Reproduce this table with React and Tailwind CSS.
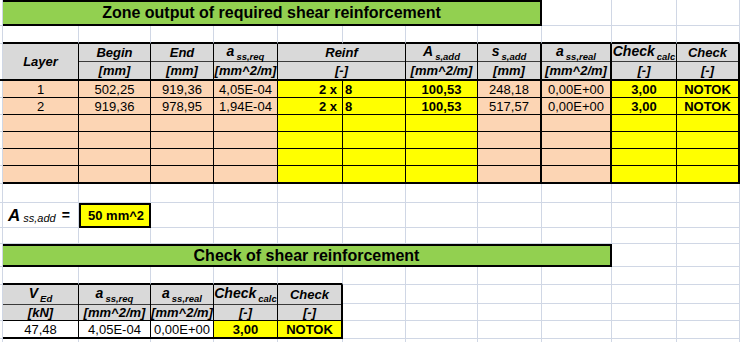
import clsx from 'clsx';

const GRID = 'border-r border-b border-[#d0d7e5]';
const W = [
  'w-[3px]',
  'w-[76px]',
  'w-[72px]',
  'w-[63px]',
  'w-[64px]',
  'w-[65px]',
  'w-[63px]',
  'w-[72px]',
  'w-[64px]',
  'w-[70px]',
  'w-[65px]',
  'w-[63px]',
];
const PEACH = 'bg-[#fcd5b4]';
const YELLOW = 'bg-[#ffff00]';
const GREY = 'bg-[#d9d9d9]';

const range = (a, b) => Array.from({ length: b - a }, (_, i) => a + i);

const Blank = ({ col, className, children }) => (
  <div className={clsx('h-full shrink-0 bg-white', W[col], GRID, className)}>
    {children}
  </div>
);

// symbol with a subscript, like a ss,req
const Sym = ({ main, sub, size = 'text-[14px]' }) => (
  <span className="font-bold italic whitespace-nowrap">
    <span className={size}>{main}</span>
    <span className="text-[9.5px] ml-[2px] align-sub">{sub}</span>
  </span>
);

const Unit = ({ children }) => (
  <span className="font-bold italic text-[13px] whitespace-nowrap">{children}</span>
);

const HeadCol = ({ w, top, unit, thick, topH }) => (
  <div
    className={clsx(
      'h-full shrink-0 flex flex-col border-black',
      w,
      GREY,
      thick ? 'border-r-2' : 'border-r'
    )}
  >
    <div className={clsx('flex items-center justify-center border-b border-[#3a3a3a]', topH)}>
      {top}
    </div>
    <div className="flex-1 flex items-center justify-center">{unit}</div>
  </div>
);

// table 1 data columns (index 1..11)
const COLS1 = [
  { bg: PEACH, align: 'justify-center' },
  { bg: PEACH, align: 'justify-center' },
  { bg: PEACH, align: 'justify-center' },
  { bg: PEACH, align: 'justify-center' },
  { bg: YELLOW, align: 'justify-end pr-[5px]', bold: true },
  { bg: YELLOW, align: 'justify-start pl-[2px]', bold: true },
  { bg: YELLOW, align: 'justify-center', bold: true },
  { bg: PEACH, align: 'justify-center', thick: true },
  { bg: PEACH, align: 'justify-center', thick: true },
  { bg: YELLOW, align: 'justify-center', bold: true },
  { bg: YELLOW, align: 'justify-center', bold: true, thick: true },
];

const ROWS1 = [
  ['1', '502,25', '919,36', '4,05E-04', '2 x', '8', '100,53', '248,18', '0,00E+00', '3,00', 'NOTOK'],
  ['2', '919,36', '978,95', '1,94E-04', '2 x', '8', '100,53', '517,57', '0,00E+00', '3,00', 'NOTOK'],
  [],
  [],
  [],
  [],
];

const COLS2 = [
  { bg: 'bg-white', align: 'justify-center' },
  { bg: 'bg-white', align: 'justify-center' },
  { bg: 'bg-white', align: 'justify-center' },
  { bg: YELLOW, align: 'justify-center', bold: true },
  { bg: YELLOW, align: 'justify-center', bold: true, thick: true },
];

const DataRow = ({ cols, values, last, h }) => (
  <div className={clsx('flex', h)}>
    <Blank col={0} />
    {cols.map((c, i) => (
      <div
        key={i}
        className={clsx(
          'h-full shrink-0 flex items-center text-[13px] border-black whitespace-nowrap',
          W[i + 1],
          c.bg,
          c.align,
          c.bold && 'font-bold',
          c.thick ? 'border-r-2' : 'border-r',
          last ? 'border-b-2' : 'border-b'
        )}
      >
        {values[i]}
      </div>
    ))}
    {range(cols.length + 1, 12).map((c) => (
      <Blank key={c} col={c} />
    ))}
  </div>
);

const BlankRow = ({ h }) => (
  <div className={clsx('flex', h)}>
    {range(0, 12).map((c) => (
      <Blank key={c} col={c} />
    ))}
  </div>
);

const App = () => {
  return (
    <div className="w-[742px] h-[342px] overflow-hidden bg-white text-black leading-none font-['Liberation_Sans',Arial,sans-serif]">
      {/* zone output title */}
      <div className="flex h-[26px]">
        <Blank col={0} />
        <div className="w-[539px] shrink-0 h-full bg-[#92d050] border-2 border-l-0 border-black flex items-center justify-center text-[16px] font-bold">
          Zone output of required shear reinforcement
        </div>
        {[9, 10, 11].map((c) => (
          <Blank key={c} col={c} />
        ))}
      </div>
      <div className="flex h-[18px]">
        <Blank col={0} />
        {range(1, 12).map((c) => (
          <div
            key={c}
            className={clsx(
              'h-full shrink-0 border-r border-r-[#d0d7e5] border-b-2 border-b-black',
              W[c]
            )}
          />
        ))}
      </div>

      {/* table 1 header */}
      <div className="flex h-[37px] border-b-2 border-black w-[740px]">
        <Blank col={0} className="border-b-0" />
        <div
          className={clsx(
            'h-full shrink-0 flex items-center justify-center border-r border-black font-bold italic text-[13px]',
            W[1],
            GREY
          )}
        >
          Layer
        </div>
        <HeadCol w={W[2]} topH="h-[18px]" top={<Unit>Begin</Unit>} unit={<Unit>[mm]</Unit>} />
        <HeadCol w={W[3]} topH="h-[18px]" top={<Unit>End</Unit>} unit={<Unit>[mm]</Unit>} />
        <HeadCol w={W[4]} topH="h-[18px]" top={<Sym main="a" sub="ss,req" />} unit={<Unit>[mm^2/m]</Unit>} />
        <HeadCol w="w-[128px]" topH="h-[18px]" top={<Unit>Reinf</Unit>} unit={<Unit>[-]</Unit>} />
        <HeadCol w={W[7]} topH="h-[18px]" top={<Sym main="A" sub="s,add" />} unit={<Unit>[mm^2/m]</Unit>} />
        <HeadCol w={W[8]} topH="h-[18px]" top={<Sym main="s" sub="s,add" />} unit={<Unit>[mm]</Unit>} thick />
        <HeadCol w={W[9]} topH="h-[18px]" top={<Sym main="a" sub="ss,real" />} unit={<Unit>[mm^2/m]</Unit>} thick />
        <HeadCol w={W[10]} topH="h-[18px]" top={<Sym main="Check" sub="calc" />} unit={<Unit>[-]</Unit>} />
        <HeadCol w={W[11]} topH="h-[18px]" top={<Unit>Check</Unit>} unit={<Unit>[-]</Unit>} thick />
      </div>

      {/* table 1 rows */}
      {ROWS1.map((r, i) => (
        <DataRow
          key={i}
          cols={COLS1}
          values={r}
          last={i === ROWS1.length - 1}
          h={i === ROWS1.length - 1 ? 'h-[18px]' : 'h-[17px]'}
        />
      ))}

      <BlankRow h="h-[19px]" />

      {/* A ss,add */}
      <div className="flex h-[25px]">
        <Blank col={0} />
        <Blank col={1} className="flex items-center pl-[5px]">
          <span className="font-bold italic text-[17px]">A</span>
          <span className="italic text-[11px] ml-[3px] mt-[7px]">ss,add</span>
          <span className="font-bold text-[14px] ml-[6px]">=</span>
        </Blank>
        <div
          className={clsx(
            'h-full shrink-0 border-2 border-black flex items-center pl-[7px] font-bold text-[13px]',
            W[2],
            YELLOW
          )}
        >
          50 mm^2
        </div>
        {range(3, 12).map((c) => (
          <Blank key={c} col={c} />
        ))}
      </div>

      <BlankRow h="h-[16px]" />

      {/* check title */}
      <div className="flex h-[23px]">
        <Blank col={0} />
        <div className="w-[609px] shrink-0 h-full bg-[#92d050] border-2 border-l-0 border-black flex items-center justify-center text-[16px] font-bold">
          Check of shear reinforcement
        </div>
        {[10, 11].map((c) => (
          <Blank key={c} col={c} />
        ))}
      </div>
      <div className="flex h-[18px]">
        <Blank col={0} />
        {range(1, 6).map((c) => (
          <div
            key={c}
            className={clsx(
              'h-full shrink-0 border-r border-r-[#d0d7e5] border-b-2 border-b-black',
              W[c]
            )}
          />
        ))}
        {range(6, 12).map((c) => (
          <Blank key={c} col={c} />
        ))}
      </div>

      {/* table 2 header */}
      <div className="flex h-[36px]">
        <Blank col={0} />
        <div className="flex h-full border-b border-black">
          <HeadCol w={W[1]} topH="h-[20px]" top={<Sym main="V" sub="Ed" />} unit={<Unit>[kN]</Unit>} />
          <HeadCol w={W[2]} topH="h-[20px]" top={<Sym main="a" sub="ss,req" />} unit={<Unit>[mm^2/m]</Unit>} />
          <HeadCol w={W[3]} topH="h-[20px]" top={<Sym main="a" sub="ss,real" />} unit={<Unit>[mm^2/m]</Unit>} />
          <HeadCol w={W[4]} topH="h-[20px]" top={<Sym main="Check" sub="calc" />} unit={<Unit>[-]</Unit>} />
          <HeadCol w={W[5]} topH="h-[20px]" top={<Unit>Check</Unit>} unit={<Unit>[-]</Unit>} thick />
        </div>
        {range(6, 12).map((c) => (
          <div key={c} className={clsx('h-full shrink-0 flex flex-col', W[c])}>
            <div className={clsx('h-[19px]', GRID)} />
            <div className={clsx('flex-1', GRID)} />
          </div>
        ))}
      </div>

      <DataRow cols={COLS2} values={['47,48', '4,05E-04', '0,00E+00', '3,00', 'NOTOK']} last h="h-[18px]" />

      <BlankRow h="h-[10px]" />
    </div>
  );
};

export default App;
